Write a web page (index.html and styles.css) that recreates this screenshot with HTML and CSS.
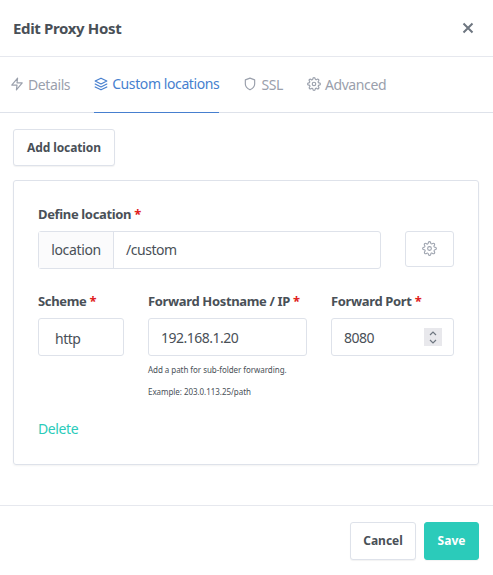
FILE: index.html
```html
<!DOCTYPE html>
<html lang="en">
<head>
  <meta charset="UTF-8">
  <meta name="viewport" content="width=device-width, initial-scale=1.0">
  <title>Edit Proxy Host</title>
  <link rel="stylesheet" href="styles.css">
</head>
<body>
  <div class="modal">
    <header class="modal-header">
      <h1>Edit Proxy Host</h1>
      <svg class="close" width="12" height="12" viewBox="0 0 12 12"><path d="M1.5 1.5l9 9M10.500 1.500l-9 9"/></svg>
    </header>

    <nav class="tabs">
      <a class="tab">
        <svg class="icon" viewBox="0 0 24 24"><path d="M13 2L3 14h9l-1 8 10-12h-9l1-8z"/></svg>
        Details
      </a>
      <a class="tab active">
        <svg class="icon" viewBox="0 0 24 24"><path d="M12 2L2 7l10 5 10-5-10-5z"/><path d="M2 17l10 5 10-5"/><path d="M2 12l10 5 10-5"/></svg>
        Custom locations
      </a>
      <a class="tab">
        <svg class="icon" viewBox="0 0 24 24"><path d="M12 22s8-4 8-10V5l-8-3-8 3v7c0 6 8 10 8 10z"/></svg>
        SSL
      </a>
      <a class="tab">
        <svg class="icon" viewBox="0 0 24 24"><circle cx="12" cy="12" r="3"/><path d="M19.400 15a1.650 1.650 0 0 0 .33 1.820l.06.06a2 2 0 1 1-2.830 2.830l-.06-.06a1.650 1.650 0 0 0-2.800 1.170V21a2 2 0 1 1-4 0v-.09a1.650 1.650 0 0 0-2.800-1.170l-.06.06a2 2 0 1 1-2.830-2.830l.06-.06A1.650 1.650 0 0 0 3.090 14H3a2 2 0 1 1 0-4h.09a1.650 1.650 0 0 0 1.170-2.800l-.06-.06a2 2 0 1 1 2.830-2.830l.06.06A1.650 1.650 0 0 0 10 3.090V3a2 2 0 1 1 4 0v.09a1.650 1.650 0 0 0 2.800 1.170l.06-.06a2 2 0 1 1 2.830 2.830l-.06.06A1.650 1.650 0 0 0 20.910 10H21a2 2 0 1 1 0 4h-.09a1.650 1.650 0 0 0-1.510 1z"/></svg>
        Advanced
      </a>
    </nav>

    <main class="content">
      <button class="btn add-btn">Add location</button>

      <section class="card">
        <label class="label">Define location <span class="req">*</span></label>
        <div class="location-row">
          <div class="input-group">
            <span class="addon">location</span>
            <span class="input-value">/custom</span>
          </div>
          <button class="gear-btn">
            <svg class="icon" viewBox="0 0 24 24"><circle cx="12" cy="12" r="3"/><path d="M19.400 15a1.650 1.650 0 0 0 .33 1.820l.06.06a2 2 0 1 1-2.830 2.830l-.06-.06a1.650 1.650 0 0 0-2.800 1.170V21a2 2 0 1 1-4 0v-.09a1.650 1.650 0 0 0-2.800-1.170l-.06.06a2 2 0 1 1-2.830-2.830l.06-.06A1.650 1.650 0 0 0 3.090 14H3a2 2 0 1 1 0-4h.09a1.650 1.650 0 0 0 1.170-2.800l-.06-.06a2 2 0 1 1 2.830-2.830l.06.06A1.650 1.650 0 0 0 10 3.090V3a2 2 0 1 1 4 0v.09a1.650 1.650 0 0 0 2.800 1.170l.06-.06a2 2 0 1 1 2.830 2.830l-.06.06A1.650 1.650 0 0 0 20.910 10H21a2 2 0 1 1 0 4h-.09a1.650 1.650 0 0 0-1.510 1z"/></svg>
          </button>
        </div>

        <div class="forward-row">
          <div class="col-scheme">
            <label class="label">Scheme <span class="req">*</span></label>
            <div class="field scheme-field">http</div>
          </div>
          <div class="col-host">
            <label class="label">Forward Hostname / IP <span class="req">*</span></label>
            <div class="field">192.168.1.20</div>
            <p class="help">Add a path for sub-folder forwarding.</p>
            <p class="help">Example: 203.0.113.25/path</p>
          </div>
          <div class="col-port">
            <label class="label">Forward Port <span class="req">*</span></label>
            <div class="field port-field">
              8080
              <span class="spinner">
                <svg width="10" height="15" viewBox="0 0 10 15"><path d="M2 5l3-3 3 3M2 10l3 3 3-3"/></svg>
              </span>
            </div>
          </div>
        </div>

        <a class="delete">Delete</a>
      </section>
    </main>

    <footer class="modal-footer">
      <button class="btn">Cancel</button>
      <button class="btn save">Save</button>
    </footer>
  </div>
</body>
</html>
```

FILE: styles.css
```css
* {
  box-sizing: border-box;
}
body {
  margin: 0;
  font-family: "Noto Sans", "Open Sans", sans-serif;
  font-size: 14px;
  color: #495057;
  background: #fff;
}
.modal {
  width: 493px;
  height: 575px;
  display: flex;
  flex-direction: column;
  overflow: hidden;
}
.modal-header {
  height: 57px;
  flex: none;
  display: flex;
  align-items: center;
  justify-content: space-between;
  padding: 0 19px 0 13px;
  border-bottom: 1px solid #e6e8ee;
}
h1 {
  margin: 0;
  font-size: 15px;
  font-weight: 700;
  letter-spacing: -0.35px;
  color: #495057;
}
.close path {
  fill: none;
  stroke: #6e7680;
  stroke-width: 2;
}
.tabs {
  height: 56px;
  flex: none;
  display: flex;
  gap: 24px;
  padding-left: 10px;
  border-bottom: 1px solid #dee2ea;
}
.tab {
  display: flex;
  align-items: center;
  gap: 4px;
  height: 56px;
  padding-bottom: 2px;
  font-size: 14px;
  letter-spacing: -0.4px;
  color: #9aa0ac;
}
.tab.active {
  color: #467fcf;
  border-bottom: 1px solid #467fcf;
}
.icon {
  width: 14px;
  height: 14px;
  fill: none;
  stroke: currentColor;
  stroke-width: 2;
  stroke-linecap: round;
  stroke-linejoin: round;
}
.content {
  flex: 1;
  padding: 16px 14px 0 13px;
}
.btn {
  height: 37px;
  padding: 0 0 1px;
  font-family: inherit;
  font-size: 12px;
  font-weight: 700;
  color: #495057;
  background: #fff;
  border: 1px solid #dee2ea;
  border-radius: 3px;
  box-shadow: 0 1px 1px rgba(0, 0, 0, 0.05);
}
.add-btn {
  width: 102px;
  letter-spacing: -0.1px;
}
.card {
  height: 285px;
  margin-top: 14px;
  padding: 25px 24px 0;
  border: 1px solid #dee2ea;
  border-radius: 3px;
  box-shadow: 0 1px 2px rgba(0, 0, 0, 0.05);
}
.label {
  display: block;
  height: 17px;
  line-height: 17px;
  margin-bottom: 8px;
  font-size: 13px;
  font-weight: 700;
  letter-spacing: -0.35px;
  white-space: nowrap;
}
.req {
  color: #e02020;
}
.location-row {
  display: flex;
  justify-content: space-between;
}
.input-group {
  width: 343px;
  height: 38px;
  display: flex;
  align-items: center;
  border: 1px solid #dee2ea;
  border-radius: 3px;
}
.addon {
  width: 75px;
  height: 100%;
  display: flex;
  align-items: center;
  justify-content: center;
  padding-bottom: 2px;
  letter-spacing: -0.35px;
  background: #fbfbfc;
  border-right: 1px solid #dee2ea;
}
.input-value {
  padding: 0 0 2px 12px;
  letter-spacing: -0.45px;
}
.gear-btn {
  width: 49px;
  height: 36px;
  display: flex;
  align-items: center;
  justify-content: center;
  padding: 0 0 2px;
  color: #9aa0ac;
  background: #fff;
  border: 1px solid #dee2ea;
  border-radius: 3px;
}
.gear-btn .icon {
  width: 15px;
  height: 15px;
  stroke-width: 1.7;
}
.forward-row {
  display: flex;
  gap: 24px;
  margin-top: 24px;
}
.col-scheme {
  width: 86px;
}
.col-host {
  width: 159px;
}
.col-port {
  width: 123px;
}
.field {
  height: 38px;
  display: flex;
  align-items: center;
  padding: 1px 12px 0;
  letter-spacing: -0.5px;
  border: 1px solid #dee2ea;
  border-radius: 3px;
}
.scheme-field {
  padding-left: 16px;
  padding-top: 2px;
}
.port-field {
  justify-content: space-between;
  padding-top: 0;
}
.spinner {
  width: 18px;
  height: 18px;
  display: flex;
  align-items: center;
  justify-content: center;
  margin-right: -1px;
  background: #e8e8ec;
}
.spinner path {
  fill: none;
  stroke: #6e7680;
  stroke-width: 1.2;
}
.help {
  margin: 0;
  height: 22px;
  line-height: 22px;
  font-size: 8px;
  letter-spacing: -0.05px;
  white-space: nowrap;
}
.help:first-of-type {
  margin-top: 3px;
}
.delete {
  display: block;
  margin-top: 16px;
  color: #2bcbba;
  letter-spacing: -0.4px;
}
.modal-footer {
  height: 70px;
  flex: none;
  display: flex;
  justify-content: flex-end;
  gap: 8px;
  padding: 16px 14px 0 0;
  border-top: 1px solid #e6e8ee;
}
.modal-footer .btn {
  height: 38px;
  width: 66px;
}
.modal-footer .save {
  width: 55px;
  color: #fff;
  background: #2bcbba;
  border-color: #2bcbba;
}
```
